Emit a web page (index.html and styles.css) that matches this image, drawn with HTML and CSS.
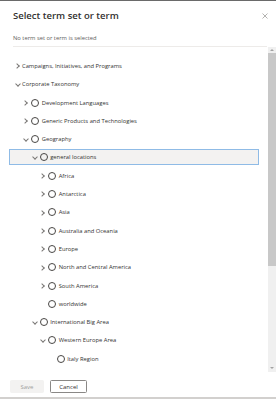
FILE: index.html
```html
<!DOCTYPE html>
<html lang="en">
<head>
    <meta charset="UTF-8">
    <meta name="viewport" content="width=device-width, initial-scale=1.0">
    <title>Select term set or term</title>
    <link rel="stylesheet" href="styles.css">
</head>
<body>

    <div class="dialog">

        <!-- Header -->
        <div class="header">
            <h1 class="title">Select term set or term</h1>
            <svg class="close" width="6" height="6" viewBox="0 0 6 6">
                <path d="M0.5 0.5 L5.5 5.5 M5.5 0.5 L0.5 5.5" stroke="#a19f9d" stroke-width="0.8" fill="none"/>
            </svg>
        </div>

        <!-- Current selection -->
        <div class="selection">No term set or term is selected</div>

        <!-- Term tree -->
        <div class="tree-wrap">
            <div class="tree">
                <div class="row lvl-0"><span class="chev right"></span><span class="label">Campaigns, Initiatives, and Programs</span></div>
                <div class="row lvl-0"><span class="chev down"></span><span class="label">Corporate Taxonomy</span></div>
                <div class="row lvl-1"><span class="chev right"></span><span class="radio"></span><span class="label">Development Languages</span></div>
                <div class="row lvl-1"><span class="chev right"></span><span class="radio"></span><span class="label">Generic Products and Technologies</span></div>
                <div class="row lvl-1"><span class="chev down"></span><span class="radio"></span><span class="label">Geography</span></div>
                <div class="row lvl-2 selected"><span class="chev down"></span><span class="radio"></span><span class="label">general locations</span></div>
                <div class="row lvl-3"><span class="chev right"></span><span class="radio"></span><span class="label">Africa</span></div>
                <div class="row lvl-3"><span class="chev right"></span><span class="radio"></span><span class="label">Antarctica</span></div>
                <div class="row lvl-3"><span class="chev right"></span><span class="radio"></span><span class="label">Asia</span></div>
                <div class="row lvl-3"><span class="chev right"></span><span class="radio"></span><span class="label">Australia and Oceania</span></div>
                <div class="row lvl-3"><span class="chev right"></span><span class="radio"></span><span class="label">Europe</span></div>
                <div class="row lvl-3"><span class="chev right"></span><span class="radio"></span><span class="label">North and Central America</span></div>
                <div class="row lvl-3"><span class="chev right"></span><span class="radio"></span><span class="label">South America</span></div>
                <div class="row lvl-3"><span class="chev"></span><span class="radio"></span><span class="label">worldwide</span></div>
                <div class="row lvl-2"><span class="chev down"></span><span class="radio"></span><span class="label">International Big Area</span></div>
                <div class="row lvl-3"><span class="chev down"></span><span class="radio"></span><span class="label">Western Europe Area</span></div>
                <div class="row lvl-4"><span class="chev"></span><span class="radio"></span><span class="label">Italy Region</span></div>
            </div>

            <!-- Scrollbar -->
            <div class="scrollbar">
                <span class="arrow up"></span>
                <div class="thumb"></div>
                <div class="track"></div>
                <span class="arrow dn"></span>
            </div>
        </div>

        <!-- Buttons -->
        <div class="footer">
            <button class="btn btn-save" disabled>Save</button>
            <button class="btn btn-cancel">Cancel</button>
        </div>

    </div>

</body>
</html>
```

FILE: styles.css
```css
body {
    margin: 0;
    font-family: "Open Sans", "Noto Sans", sans-serif;
    color: #323130;
    background-color: #ffffff;
}

.dialog {
    width: 276px;
    height: 399px;
    box-sizing: border-box;
    border-top: 1px solid #6a6a6a;
    border-bottom: 2px solid #d2d0ce;
    display: flex;
    flex-direction: column;
}

.header {
    height: 28px;
    display: flex;
    justify-content: space-between;
    align-items: flex-start;
    padding: 8px 8px 0 13px;
    box-sizing: border-box;
}

.title {
    margin: 0;
    font-size: 9.5px;
    line-height: 13px;
    font-weight: 600;
}

.close {
    margin-top: 4px;
}

.selection {
    height: 18px;
    margin: 0 9px 0 13px;
    padding-top: 4px;
    box-sizing: border-box;
    border-bottom: 1px solid #edebe9;
    font-size: 5.8px;
    line-height: 10px;
    color: #605e5c;
}

.tree-wrap {
    height: 325px;
    display: flex;
}

.tree {
    flex: 1;
    overflow: hidden;
    padding: 11px 9px 0 9px;
    display: flex;
    flex-direction: column;
    gap: 2.3px;
}

.row {
    height: 16px;
    flex-shrink: 0;
    display: flex;
    align-items: center;
    box-sizing: border-box;
    font-size: 5.8px;
}

.lvl-0 { padding-left: 4px; }
.lvl-1 { padding-left: 12.5px; }
.lvl-2 { padding-left: 21px; }
.lvl-3 { padding-left: 29.5px; }
.lvl-4 { padding-left: 38px; }

.lvl-0 .label { margin-left: 1px; }

.row.selected {
    background-color: #f3f2f1;
    border: 1px solid #8fbbe6;
}

.row.selected.lvl-2 { padding-left: 20px; }

.chev {
    width: 8px;
    height: 8px;
    flex-shrink: 0;
    position: relative;
}

.chev.right::before,
.chev.down::before {
    content: "";
    position: absolute;
    width: 3px;
    height: 3px;
    border-right: 0.7px solid #797775;
    border-bottom: 0.7px solid #797775;
}

.chev.right::before {
    left: 1.8px;
    top: 2.3px;
    transform: rotate(-45deg);
}

.chev.down::before {
    left: 2.5px;
    top: 1.6px;
    transform: rotate(45deg);
}

.radio {
    width: 8px;
    height: 8px;
    margin-left: 1.5px;
    box-sizing: border-box;
    border: 0.8px solid #484644;
    border-radius: 50%;
    flex-shrink: 0;
}

.radio + .label {
    margin-left: 2.7px;
}

.label {
    white-space: nowrap;
}

.scrollbar {
    width: 8px;
    background-color: #f0f0f0;
    display: flex;
    flex-direction: column;
}

.thumb {
    height: 213px;
    background-color: #c8c8c8;
}

.track {
    flex: 1;
}

.arrow {
    height: 6px;
    position: relative;
}

.arrow.dn {
    height: 9px;
}

.arrow::before {
    content: "";
    position: absolute;
    left: 2px;
    border-left: 2px solid transparent;
    border-right: 2px solid transparent;
}

.arrow.up::before {
    top: 2px;
    border-bottom: 2px solid #a3a3a3;
}

.arrow.dn::before {
    top: 4px;
    border-top: 2px solid #a3a3a3;
}

.footer {
    flex: 1;
    display: flex;
    align-items: flex-start;
    gap: 6px;
    padding: 8px 0 0 10px;
}

.btn {
    height: 13px;
    padding: 0;
    font-family: inherit;
    font-size: 6px;
    border-radius: 1.5px;
    box-sizing: border-box;
}

.btn-save {
    width: 34px;
    border: 1px solid #f3f2f1;
    background-color: #f3f2f1;
    color: #a19f9d;
}

.btn-cancel {
    width: 37px;
    border: 1px solid #8a8886;
    background-color: #ffffff;
    color: #323130;
}
```
